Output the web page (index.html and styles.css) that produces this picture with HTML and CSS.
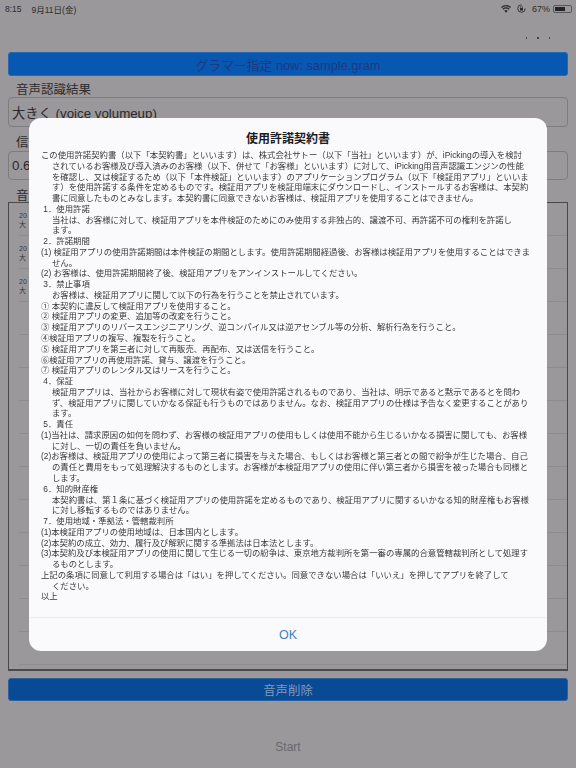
FILE: index.html
```html
<!DOCTYPE html>
<html lang="ja">
<head>
<meta charset="utf-8">
<title>使用許諾契約書</title>
<link rel="stylesheet" href="styles.css">
</head>
<body>
<div class="app">
  <header class="status">
    <div class="status-left"><span>8:15</span><span>9月11日(金)</span></div>
    <div class="status-right">
      <svg class="wifi" viewBox="0 0 12 9"><path d="M6 9 3.9 6.6a3 3 0 0 1 4.2 0Z"/><path d="M2.9 5.5 1.7 4.2a6.2 6.2 0 0 1 8.6 0L9.1 5.5a4.5 4.5 0 0 0-6.2 0Z"/><path d="M1 3.3 0 2.1a8.8 8.8 0 0 1 12 0l-1 1.2a7.3 7.3 0 0 0-10 0Z"/></svg>
      <svg class="lock" viewBox="0 0 10 10"><path d="M5 .8a4.2 4.2 0 1 0 4.2 4.2" fill="none" stroke="#2c2c2e" stroke-width="1"/><rect x="3.3" y="4.5" width="3.4" height="2.8" fill="#2c2c2e"/><path d="M3.9 4.5V3.5a1.1 1.1 0 0 1 2.2 0v1" fill="none" stroke="#2c2c2e" stroke-width=".7"/></svg>
      <span>67%</span>
      <span class="battery"><span class="battery-level"></span></span>
    </div>
  </header>
  <div class="menu-dots"><i></i><i></i><i></i></div>
  <div class="btn btn-top">グラマー指定 now: sample.gram</div>
  <div class="label label-1">音声認識結果</div>
  <div class="field">大きく (voice volumeup)</div>
  <div class="label label-2">信</div>
  <div class="field field-2">0.6</div>
  <div class="label label-3">音</div>
  <div class="list">
    <div class="row"><span>20</span><span>大</span></div>
    <div class="row"><span>20</span><span>大</span></div>
    <div class="row"><span>20</span><span>大</span></div>
    <div class="row"></div>
    <div class="row"></div>
    <div class="row"></div>
    <div class="row"></div>
    <div class="row"></div>
    <div class="row"></div>
    <div class="row"></div>
    <div class="row"></div>
    <div class="row"></div>
    <div class="row"></div>
    <div class="row"></div>
  </div>
  <div class="btn btn-bottom">音声削除</div>
  <div class="start">Start</div>
</div>

<div class="modal">
  <h1 class="modal-title">使用許諾契約書</h1>
  <div class="modal-body">
    <p>この使用許諾契約書（以下「本契約書」といいます）は、株式会社サトー（以下「当社」といいます）が、iPickingの導入を検討</p>
    <p class="in">されているお客様及び導入済みのお客様（以下、併せて「お客様」といいます）に対して、iPicking用音声認識エンジンの性能</p>
    <p class="in">を確認し、又は検証するため（以下「本件検証」といいます）のアプリケーションプログラム（以下「検証用アプリ」といいま</p>
    <p class="in">す）を使用許諾する条件を定めるものです。検証用アプリを検証用端末にダウンロードし、インストールするお客様は、本契約</p>
    <p class="in">書に同意したものとみなします。本契約書に同意できないお客様は、検証用アプリを使用することはできません。</p>
    <p>&nbsp;1．使用許諾</p>
    <p class="in">当社は、お客様に対して、検証用アプリを本件検証のためにのみ使用する非独占的、譲渡不可、再許諾不可の権利を許諾し</p>
    <p class="in">ます。</p>
    <p>&nbsp;2．許諾期間</p>
    <p>(1) 検証用アプリの使用許諾期間は本件検証の期間とします。使用許諾期間経過後、お客様は検証用アプリを使用することはできま</p>
    <p class="in">せん。</p>
    <p>(2) お客様は、使用許諾期間終了後、検証用アプリをアンインストールしてください。</p>
    <p>&nbsp;3．禁止事項</p>
    <p class="in">お客様は、検証用アプリに関して以下の行為を行うことを禁止されています。</p>
    <p>① 本契約に違反して検証用アプリを使用すること。</p>
    <p>② 検証用アプリの変更、追加等の改変を行うこと。</p>
    <p>③ 検証用アプリのリバースエンジニアリング、逆コンパイル又は逆アセンブル等の分析、解析行為を行うこと。</p>
    <p>④検証用アプリの複写、複製を行うこと。</p>
    <p>⑤ 検証用アプリを第三者に対して再販売、再配布、又は送信を行うこと。</p>
    <p>⑥検証用アプリの再使用許諾、貸与、譲渡を行うこと。</p>
    <p>⑦ 検証用アプリのレンタル又はリースを行うこと。</p>
    <p>&nbsp;4．保証</p>
    <p class="in">検証用アプリは、当社からお客様に対して現状有姿で使用許諾されるものであり、当社は、明示であると黙示であるとを問わ</p>
    <p class="in">ず、検証用アプリに関していかなる保証も行うものではありません。なお、検証用アプリの仕様は予告なく変更することがあり</p>
    <p class="in">ます。</p>
    <p>&nbsp;5．責任</p>
    <p>(1)当社は、請求原因の如何を問わず、お客様の検証用アプリの使用もしくは使用不能から生じるいかなる損害に関しても、お客様</p>
    <p class="in">に対し、一切の責任を負いません。</p>
    <p>(2)お客様は、検証用アプリの使用によって第三者に損害を与えた場合、もしくはお客様と第三者との間で紛争が生じた場合、自己</p>
    <p class="in">の責任と費用をもって処理解決するものとします。お客様が本検証用アプリの使用に伴い第三者から損害を被った場合も同様と</p>
    <p class="in">します。</p>
    <p>&nbsp;6．知的財産権</p>
    <p class="in">本契約書は、第１条に基づく検証用アプリの使用許諾を定めるものであり、検証用アプリに関するいかなる知的財産権もお客様</p>
    <p class="in">に対し移転するものではありません。</p>
    <p>&nbsp;7．使用地域・準拠法・管轄裁判所</p>
    <p>(1)本検証用アプリの使用地域は、日本国内とします。</p>
    <p>(2)本契約の成立、効力、履行及び解釈に関する準拠法は日本法とします。</p>
    <p>(3)本契約及び本検証用アプリの使用に関して生じる一切の紛争は、東京地方裁判所を第一審の専属的合意管轄裁判所として処理す</p>
    <p class="in">るものとします。</p>
    <p>上記の条項に同意して利用する場合は「はい」を押してください。同意できない場合は「いいえ」を押してアプリを終了して</p>
    <p class="in">ください。</p>
    <p>以上</p>
  </div>
  <div class="modal-action">OK</div>
</div>
</body>
</html>
```

FILE: styles.css
```css
* { box-sizing: border-box; }
html, body { margin: 0; padding: 0; height: 100%; overflow: hidden; }
body {
  background: #9a989a;
  font-family: "Liberation Sans", "Noto Sans CJK JP", sans-serif;
  color: #2c2c2e;
  position: relative;
  width: 576px;
  height: 768px;
}
.app { display: flex; flex-direction: column; padding: 0 8px; height: 768px; }

.status { display: flex; justify-content: space-between; align-items: center; height: 17px; margin: 0 -4px 0 -3px; font-size: 8.5px; color: #2c2c2e; }
.status-left { display: flex; gap: 10px; align-items: center; }
.status-right { display: flex; align-items: center; font-size: 9px; }
.wifi { width: 10px; height: 8px; fill: #2c2c2e; margin-right: 6px; }
.lock { width: 9px; height: 9px; margin-right: 6px; }
.battery { width: 19px; height: 8px; margin-left: 3px; border: 1px solid #57565a; border-radius: 2px; padding: 1px; display: block; }
.battery-level { display: block; width: 68%; height: 100%; background: #232325; }

.menu-dots { display: flex; justify-content: flex-end; gap: 10px; height: 35px; padding: 20px 18px 0 0; }
.menu-dots i { display: block; width: 1.5px; height: 2px; background: #47474a; }

.btn { border-radius: 3px; display: flex; align-items: center; justify-content: center; font-size: 12.8px; }
.btn-top { height: 24px; background: #0858b2; color: #1b3a85; border: 1px solid #2767b0; }
.btn-bottom { height: 23px; font-size: 12.4px; background: #084a94; color: #7d9ac2; border: 1px solid #2c619e; margin-top: 7px; }

.label { font-size: 12.5px; line-height: 20px; margin-left: 8px; color: #2c2c2e; }
.label-1 { margin-top: 3px; height: 18px; line-height: 22px; }
.label-2 { margin-top: 6px; height: 18px; }
.label-3 { margin-top: 6px; height: 16px; }
.field { height: 30px; border: 1px solid #7d7c7e; border-radius: 4px; padding: 0 3px; display: flex; align-items: center; font-size: 13.3px; color: #2a2a2c; }
.field-2 { height: 29px; }

.list { height: 469px; border: 1px solid #4a4a4c; border-width: 1px 1px 2px; display: flex; flex-direction: column; padding-left: 10px; flex: none; }
.row { height: 33px; flex: none; border-bottom: 1px solid #8d8c8e; display: flex; flex-direction: column; padding-top: 8px; font-size: 7px; line-height: 9px; color: #3a3a3c; }

.start { margin-top: 39px; height: 14px; line-height: 14px; text-align: center; font-size: 12px; color: #6a696c; }

.modal {
  position: absolute;
  left: 29px;
  top: 118px;
  width: 518px;
  height: 533px;
  background: #fafafc;
  border-radius: 12px;
  display: flex;
  flex-direction: column;
}
.modal-title { margin: 14px 0 0; height: 18px; font-size: 12px; line-height: 15px; font-weight: 700; text-align: center; color: #1c1c1e; }
.modal-body { padding: 0 0 0 12px; font-size: 8.38px; line-height: 10.76px; color: #38383a; flex: 1; filter: blur(.25px); }
.modal-body p { margin: 0; white-space: nowrap; }
.modal-body .in { padding-left: 11px; }
.modal-action { height: 34px; border-top: 1px solid #ececee; margin: 0 1px; display: flex; align-items: center; justify-content: center; font-size: 12.5px; color: #3c82bd; }
```
